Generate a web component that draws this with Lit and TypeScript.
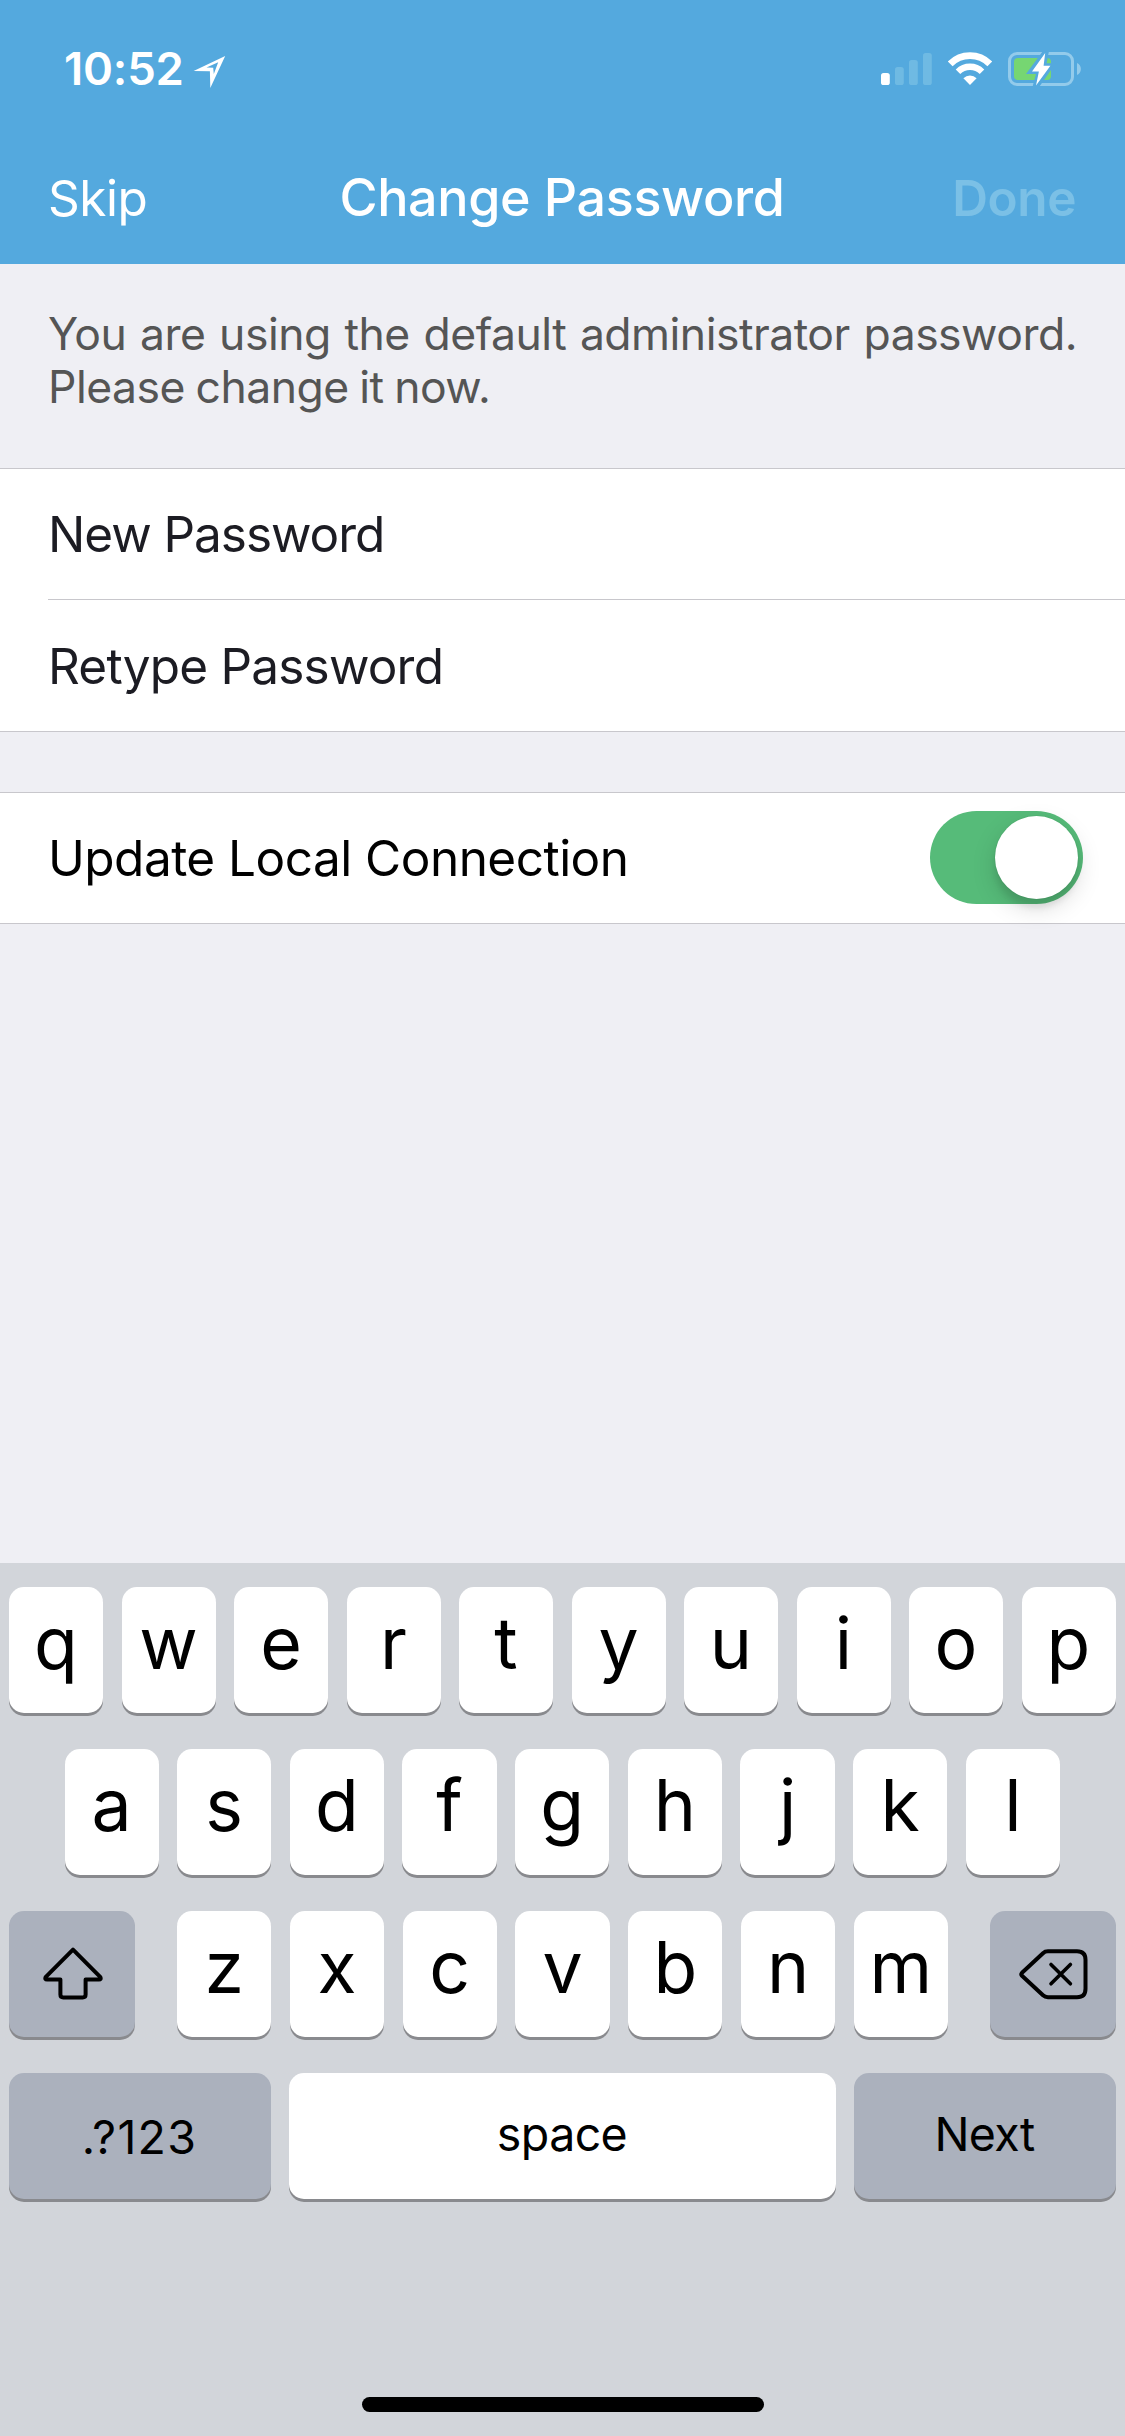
import { LitElement, html, css } from "lit";
import { customElement, property } from "lit/decorators.js";
import { classMap } from "lit/directives/class-map.js";

@customElement("status-bar")
class StatusBar extends LitElement {
  static styles = css`
    :host {
      display: flex;
      align-items: flex-start;
      justify-content: space-between;
      box-sizing: border-box;
      height: 132px;
      padding: 52px 43px 0 64px;
      color: #fff;
    }
    svg { display: block; }
    .left, .right { display: flex; align-items: flex-start; }
    .time {
      font-size: 45.5px;
      font-weight: 580;
      line-height: 34px;
      letter-spacing: -0.2px;
      width: 129px;
      white-space: nowrap;
    }
    .arrow { margin-top: 4px; }
    .wifi { margin-left: 15px; }
    .battery { margin-left: 15px; }
  `;
  render() {
    return html`
      <div class="left">
        <span class="time">10:52</span>
        <svg class="arrow" width="33" height="33" viewBox="0 0 33 33">
          <path fill="#fff" fill-rule="evenodd"
            d="M32.2 0 L0.6 15 L16.9 15.2 L17.3 32 Z M25.2 6.3 L13.5 11.4 L20.2 11.7 L20.8 18 Z" />
        </svg>
      </div>
      <div class="right">
        <svg width="51" height="34" viewBox="0 0 51 34">
          <rect x="0" y="21" width="8.8" height="12" rx="2.6" fill="#fff" />
          <g fill="#6fbae3">
            <rect x="14" y="15" width="8.8" height="18" rx="2.6" />
            <rect x="28" y="8" width="8.8" height="25" rx="2.6" />
            <rect x="42" y="1" width="8.8" height="32" rx="2.6" />
          </g>
        </svg>
        <svg class="wifi" width="46" height="34" viewBox="0 0 46 34">
          <g fill="none" stroke="#fff">
            <path stroke-width="6.8" d="M3.2 11.9 A28 28 0 0 1 42.8 11.9" />
            <path stroke-width="6.4" d="M11 19.7 A17 17 0 0 1 35 19.7" />
          </g>
          <path fill="#fff" d="M16.4 26.2 A9.4 9.4 0 0 1 29.6 26.2 L23 33 Z" />
        </svg>
        <svg class="battery" width="74" height="35" viewBox="0 0 74 35">
          <rect x="1.5" y="1.5" width="63" height="31" rx="7.5" fill="none" stroke="#93cbeb" stroke-width="3" />
          <rect x="6" y="6" width="37" height="22" rx="4" fill="#76d672" />
          <path fill="#93cbeb" d="M69 11 C74.2 13.2 74.2 20.8 69 23 Z" />
          <path fill="#54a9de" d="M34.2 0 L18 22 L28 22 L24.6 34.5 L31.5 34.5 L47.6 11.2 L38.6 11.2 L40.8 0 Z" />
          <path fill="#fff" d="M37.2 1 L24 19.4 L30.9 19.4 L28 33.4 L42.4 13.8 L35.6 13.8 Z" />
        </svg>
      </div>
    `;
  }
}

@customElement("key-cap")
class KeyCap extends LitElement {
  @property() label = "";
  @property() kind = "letter";
  static styles = css`
    :host { display: block; min-width: 0; }
    .key {
      display: flex;
      align-items: center;
      justify-content: center;
      box-sizing: border-box;
      width: 100%;
      height: 126px;
      border-radius: 15px;
      background: #fff;
      box-shadow: 0 3px 0 #898a8e;
      color: #000;
      white-space: nowrap;
    }
    .letter {
      padding-bottom: 14px;
      font-size: 71.5px;
      font-weight: 380;
      line-height: 80px;
    }
    .dark { background: #abb1bd; }
    .word { padding-bottom: 4px; font-size: 46.5px; letter-spacing: -0.6px; }
    .number { padding-top: 2px; font-size: 46.5px; letter-spacing: 1.3px; }
    svg { display: block; }
    .shift { margin: -1px 0 0 1px; }
  `;
  private face() {
    if (this.kind === "shift") {
      return html`<svg class="shift" width="60" height="53" viewBox="0 0 60 53" fill="none"
        stroke="#000" stroke-width="4" stroke-linejoin="round">
        <path d="M30 2.6 L57.4 30.2 Q58.4 32.6 56 32.6 L42.6 32.6 V47.5 Q42.6 50.4 39.7 50.4 H20.3 Q17.4 50.4 17.4 47.5 V32.6 H4 Q1.6 32.6 2.6 30.2 Z" />
      </svg>`;
    }
    if (this.kind === "delete") {
      return html`<svg width="69" height="51" viewBox="0 0 69 51" fill="none"
        stroke="#000" stroke-width="4" stroke-linejoin="round" stroke-linecap="round">
        <path d="M29 2.3 H58 Q66.5 2.3 66.5 10.8 V39.7 Q66.5 48.2 58 48.2 H29 Q26 48.2 24 46.3 L3 26.8 Q1.6 25.3 3 23.8 L24 4.2 Q26 2.3 29 2.3 Z" />
        <path stroke-width="3.6" d="M32 15.4 L51.4 34.8 M51.4 15.4 L32 34.8" />
      </svg>`;
    }
    return this.label;
  }
  render() {
    const k = this.kind;
    return html`<div class=${classMap({
      key: true,
      letter: k === "letter",
      word: k === "space" || k === "next",
      number: k === "number",
      dark: k !== "letter" && k !== "space",
    })}>${this.face()}</div>`;
  }
}

@customElement("soft-keyboard")
class SoftKeyboard extends LitElement {
  static styles = css`
    :host {
      display: flex;
      flex-direction: column;
      box-sizing: border-box;
      height: 873px;
      padding-top: 24px;
      background: #d2d5da;
    }
    .rows { display: flex; flex-direction: column; gap: 36px; flex: 1; }
    .row { display: grid; column-gap: 18.5px; padding: 0 9.5px 0 9px; }
    .top { grid-template-columns: repeat(10, 1fr); }
    .home { grid-template-columns: repeat(9, 1fr); padding: 0 65px 0 64.5px; }
    .third { grid-template-columns: 126px 1fr 126px; column-gap: 42px; padding: 0 9px; }
    .inner { display: grid; grid-template-columns: repeat(7, 1fr); column-gap: 18.5px; }
    .bottom { grid-template-columns: 262px 1fr 262px; column-gap: 18px; padding: 0 9.5px 0 8.5px; }
    .indicator {
      align-self: center;
      width: 402px;
      height: 15px;
      margin-bottom: 24px;
      border-radius: 8px;
      background: #000;
    }
  `;
  private letters(s: string) {
    return [...s].map((c) => html`<key-cap label=${c}></key-cap>`);
  }
  render() {
    return html`
      <div class="rows">
        <div class="row top">${this.letters("qwertyuiop")}</div>
        <div class="row home">${this.letters("asdfghjkl")}</div>
        <div class="row third">
          <key-cap kind="shift"></key-cap>
          <div class="inner">${this.letters("zxcvbnm")}</div>
          <key-cap kind="delete"></key-cap>
        </div>
        <div class="row bottom">
          <key-cap kind="number" label=".?123"></key-cap>
          <key-cap kind="space" label="space"></key-cap>
          <key-cap kind="next" label="Next"></key-cap>
        </div>
      </div>
      <div class="indicator"></div>
    `;
  }
}

@customElement("app-root")
class AppRoot extends LitElement {
  static styles = css`
    :host {
      display: flex;
      flex-direction: column;
      width: 1125px;
      height: 2436px;
      overflow: hidden;
      background: #efeff4;
      font-family: Inter, "Liberation Sans", sans-serif;
    }
    .header { background: #54a9de; color: #fff; height: 264px; }
    .nav {
      display: grid;
      grid-template-columns: 1fr auto 1fr;
      align-items: center;
      height: 132px;
      padding: 0 49px 0 48px;
      font-size: 49.5px;
      white-space: nowrap;
    }
    .title { font-size: 52px; font-weight: 550; letter-spacing: -0.35px; margin-top: -2px; }
    .skip { letter-spacing: -0.5px; }
    .done { justify-self: end; font-weight: 600; color: #7bc0e6; letter-spacing: -0.4px; }
    .message {
      box-sizing: border-box;
      height: 204px;
      margin: 0;
      padding: 44px 48px 0;
      font-size: 44.5px;
      line-height: 53px;
      letter-spacing: -0.5px;
      word-spacing: -1.5px;
      text-align: justify;
      color: #555;
    }
    .group {
      background: #fff;
      border-top: 1px solid #c8c7cc;
      border-bottom: 1px solid #c8c7cc;
      padding-left: 48px;
      font-size: 49.5px;
      letter-spacing: -1.05px;
    }
    .row {
      display: flex;
      align-items: center;
      justify-content: space-between;
      height: 130px;
      color: #1c1c23;
    }
    .row + .row {
      height: 131px;
      border-top: 1px solid #c8c7cc;
      box-sizing: content-box;
      letter-spacing: -0.8px;
    }
    .connection { margin-top: 60px; letter-spacing: -0.52px; }
    .connection .row { color: #000; padding-right: 42px; }
    .toggle {
      display: flex;
      align-items: center;
      justify-content: flex-end;
      box-sizing: border-box;
      width: 153px;
      height: 93px;
      margin-top: -1px;
      padding-right: 5px;
      border-radius: 47px;
      background: #56bb79;
    }
    .knob {
      width: 83px;
      height: 83px;
      border-radius: 50%;
      background: #fff;
      box-shadow: 0 9px 24px rgba(0, 0, 0, 0.15), 0 9px 6px rgba(0, 0, 0, 0.08), 0 0 0 1px rgba(0, 0, 0, 0.03);
    }
    .space { flex: 1; }
  `;
  render() {
    return html`
      <div class="header">
        <status-bar></status-bar>
        <div class="nav">
          <span class="skip">Skip</span>
          <span class="title">Change Password</span>
          <span class="done">Done</span>
        </div>
      </div>
      <p class="message">You are using the default administrator password. Please change it now.</p>
      <div class="group">
        <div class="row"><span>New Password</span></div>
        <div class="row"><span>Retype Password</span></div>
      </div>
      <div class="group connection">
        <div class="row">
          <span>Update Local Connection</span>
          <div class="toggle"><div class="knob"></div></div>
        </div>
      </div>
      <div class="space"></div>
      <soft-keyboard></soft-keyboard>
    `;
  }
}
